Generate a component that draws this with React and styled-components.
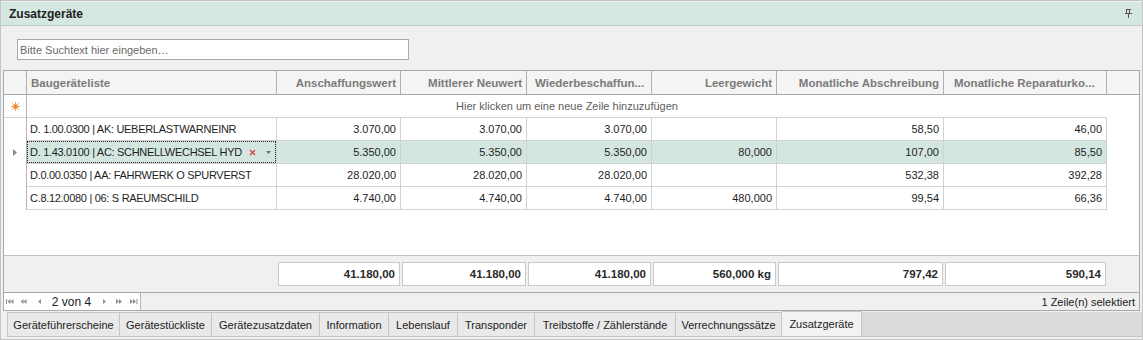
import React from "react";
import styled, { createGlobalStyle } from "styled-components";

const GlobalStyle = createGlobalStyle`
  html, body { margin: 0; padding: 0; background: #ffffff; }
  body { font-family: "Liberation Sans", Arial, sans-serif; font-size: 11px; color: #1e1e1e; }
  * { box-sizing: border-box; }
`;

const COLS = "23px 250px 124px 126px 125px 125px 167px 163px 1fr";

const Panel = styled.div`
  width: 1143px;
  height: 340px;
  border: 1px solid #c4c4c4;
  padding-top: 1px;
  background: #f0f0f0;
  display: flex;
  flex-direction: column;
`;

const TitleBar = styled.div`
  height: 24px;
  flex: none;
  background: #d4e8e1;
  border-bottom: 1px solid #b9cfc8;
  display: flex;
  align-items: center;
  justify-content: space-between;
  padding: 0 8px 0 8px;
`;

const TitleText = styled.span`
  font-weight: bold;
  font-size: 12px;
  color: #222;
`;

const PinIcon = styled.svg`
  width: 7px;
  height: 9px;
  margin-right: 2px;
  margin-top: -1px;
`;

const SearchArea = styled.div`
  flex: none;
  padding: 13px 16px 10px 16px;
`;

const SearchInput = styled.input`
  display: block;
  width: 392px;
  height: 21px;
  border: 1px solid #a9a9a9;
  background: #fff;
  padding: 0 2px;
  font-family: "Liberation Sans", Arial, sans-serif;
  font-size: 11px;
  color: #333;
  outline: none;
  &::placeholder { color: #6a6a6a; }
`;

const GridFrame = styled.div`
  flex: none;
  margin: 0 2px;
  height: 241px;
  border: 1px solid #a8a8a8;
  background: #fff;
  display: flex;
  flex-direction: column;
`;

const HeaderRow = styled.div`
  display: grid;
  grid-template-columns: ${COLS};
  height: 24px;
  flex: none;
  background: #f4f4f4;
  border-bottom: 1px solid #a8a8a8;
`;

const HeaderCell = styled.div`
  display: flex;
  align-items: center;
  justify-content: ${(p) => (p.$align === "right" ? "flex-end" : "flex-start")};
  padding: 0 4px 0 ${(p) => (p.$pl || 4)}px;
  border-right: ${(p) => (p.$last ? "none" : "1px solid #b0b0b0")};
  font-weight: bold;
  font-size: 11.5px;
  color: #7b7b7b;
  white-space: nowrap;
  overflow: hidden;
`;

const NewRow = styled.div`
  display: grid;
  grid-template-columns: ${COLS};
  height: 23px;
  flex: none;
`;

const Indicator = styled.div`
  display: flex;
  align-items: center;
  justify-content: center;
  border-right: 1px solid #b4b4b4;
  border-bottom: ${(p) => (p.$line ? "1px solid #d2d2d2" : "none")};
`;

const NewRowText = styled.div`
  grid-column: 2 / 9;
  display: flex;
  align-items: center;
  justify-content: center;
  border-bottom: 1px solid #d2d2d2;
  color: #5e5e5e;
  font-size: 11px;
`;

const Row = styled.div`
  display: grid;
  grid-template-columns: ${COLS};
  height: 23px;
  flex: none;
`;

const Cell = styled.div`
  position: relative;
  display: flex;
  align-items: center;
  justify-content: ${(p) => (p.$align === "right" ? "flex-end" : "flex-start")};
  padding: 0 4px 0 3px;
  background: ${(p) => (p.$selected ? "#d3e7e0" : "#ffffff")};
  border-right: 1px solid #d2d2d2;
  border-bottom: 1px solid #d2d2d2;
  white-space: nowrap;
  overflow: hidden;
  color: #1e1e1e;
  letter-spacing: ${(p) => (p.$tight ? "-0.3px" : "0")};
`;

const FocusBox = styled.div`
  position: absolute;
  inset: 0;
  border: 1px dotted #222;
  pointer-events: none;
`;

const CellEditor = styled.div`
  position: absolute;
  right: 5px;
  top: 0;
  bottom: 0;
  display: flex;
  align-items: center;
  gap: 10px;
`;

const Blank = styled.div``;

const EmptyArea = styled.div`
  flex: 1;
  background: #fff;
`;

const SummaryRow = styled.div`
  display: grid;
  grid-template-columns: ${COLS};
  height: 38px;
  flex: none;
  background: #f0f0f0;
  border-top: 1px solid #c2c2c2;
  border-bottom: 1px solid #a8a8a8;
`;

const SummaryCell = styled.div`
  padding: 6px 1px 0 1px;
`;

const SummaryBox = styled.div`
  height: 24px;
  background: #fff;
  border: 1px solid #c9c9c9;
  display: flex;
  align-items: center;
  justify-content: flex-end;
  padding-right: 4px;
  font-weight: bold;
  font-size: 11.5px;
  color: #2a2a2a;
`;

const NavBar = styled.div`
  height: 17px;
  flex: none;
  display: flex;
  align-items: stretch;
  justify-content: space-between;
  background: #f0f0f0;
`;

const Navigator = styled.div`
  width: 137px;
  background: #fff;
  border-right: 1px solid #b4b4b4;
  display: flex;
  align-items: center;
`;

const NavButton = styled.div`
  width: ${(p) => p.$w}px;
  height: 100%;
  display: flex;
  align-items: center;
  justify-content: center;
`;

const NavText = styled.span`
  padding: 0 5px;
  font-size: 12px;
  color: #222;
  white-space: nowrap;
`;

const StatusText = styled.span`
  align-self: center;
  padding-right: 4px;
  font-size: 11px;
  color: #222;
`;

const TabStrip = styled.div`
  display: flex;
  height: 26px;
  flex: none;
  padding-left: 6px;
  background: #f0f0f0;
`;

const Tab = styled.div`
  width: ${(p) => p.$w}px;
  height: ${(p) => (p.$active ? "26px" : "25px")};
  margin-top: ${(p) => (p.$active ? "0" : "1px")};
  display: flex;
  align-items: center;
  justify-content: center;
  background: ${(p) => (p.$active ? "#f2f2f2" : "#e9e9e9")};
  border: 1px solid #c6c6c6;
  border-left: ${(p) => (p.$first ? "1px solid #c6c6c6" : "none")};
  font-size: 11px;
  color: #222;
  white-space: nowrap;
`;

const TabFiller = styled.div`
  flex: 1;
  margin-top: 1px;
  background: #dcdcdc;
  border-bottom: 1px solid #c6c6c6;
`;

const BottomEdge = styled.div`
  flex: 1;
  background: #f0f0f0;
`;

const Star = () => (
  <svg width="9" height="9" viewBox="0 0 9 9">
    <g stroke="#f5a05a" strokeWidth="1">
      <line x1="4.5" y1="0" x2="4.5" y2="9" />
      <line x1="0" y1="4.5" x2="9" y2="4.5" />
      <line x1="1.3" y1="1.3" x2="7.7" y2="7.7" />
      <line x1="7.7" y1="1.3" x2="1.3" y2="7.7" />
    </g>
    <circle cx="4.5" cy="4.5" r="2.3" fill="#f08a30" />
  </svg>
);

const RowArrow = () => (
  <svg width="4" height="7" viewBox="0 0 4 7">
    <path d="M0 0 L4 3.5 L0 7 Z" fill="#8a8a8a" />
  </svg>
);

const Tri = ({ dir, x = 0 }) =>
  dir === "l" ? <path d={`M${x + 3} 0 L${x} 2.5 L${x + 3} 5 Z`} /> : <path d={`M${x} 0 L${x + 3} 2.5 L${x} 5 Z`} />;

const NavIcon = ({ kind }) => {
  let content;
  let w = 8;
  if (kind === "first") {
    content = (
      <>
        <rect x="0" y="0" width="1" height="5" />
        <Tri dir="l" x={1.5} />
        <Tri dir="l" x={4.5} />
      </>
    );
  } else if (kind === "prevPage") {
    content = (
      <>
        <Tri dir="l" x={0.5} />
        <Tri dir="l" x={3.5} />
      </>
    );
    w = 7;
  } else if (kind === "prev") {
    content = <Tri dir="l" x={0} />;
    w = 3;
  } else if (kind === "next") {
    content = <Tri dir="r" x={0} />;
    w = 3;
  } else if (kind === "nextPage") {
    content = (
      <>
        <Tri dir="r" x={0} />
        <Tri dir="r" x={3} />
      </>
    );
    w = 7;
  } else {
    content = (
      <>
        <Tri dir="r" x={0} />
        <Tri dir="r" x={3} />
        <rect x="6.5" y="0" width="1" height="5" />
      </>
    );
  }
  return (
    <svg width={w} height="5" viewBox={`0 0 ${w} 5`} fill="#8f8f8f">
      {content}
    </svg>
  );
};

const columns = [
  { key: "name", label: "Baugeräteliste", align: "left", pl: 4 },
  { key: "a", label: "Anschaffungswert", align: "right" },
  { key: "m", label: "Mittlerer Neuwert", align: "right" },
  { key: "w", label: "Wiederbeschaffun...", align: "left", pl: 8 },
  { key: "l", label: "Leergewicht", align: "right" },
  { key: "ab", label: "Monatliche Abschreibung", align: "right" },
  { key: "r", label: "Monatliche Reparaturko...", align: "left", pl: 10 },
];

const rows = [
  { name: "D. 1.00.0300 | AK: UEBERLASTWARNEINR", a: "3.070,00", m: "3.070,00", w: "3.070,00", l: "", ab: "58,50", r: "46,00" },
  { name: "D. 1.43.0100 | AC: SCHNELLWECHSEL HYD", a: "5.350,00", m: "5.350,00", w: "5.350,00", l: "80,000", ab: "107,00", r: "85,50", selected: true },
  { name: "D.0.00.0350 | AA: FAHRWERK O SPURVERST", a: "28.020,00", m: "28.020,00", w: "28.020,00", l: "", ab: "532,38", r: "392,28" },
  { name: "C.8.12.0080 | 06: S RAEUMSCHILD", a: "4.740,00", m: "4.740,00", w: "4.740,00", l: "480,000", ab: "99,54", r: "66,36" },
];

const summary = ["41.180,00", "41.180,00", "41.180,00", "560,000 kg", "797,42", "590,14"];

const tabs = [
  { label: "Geräteführerscheine", w: 113 },
  { label: "Gerätestückliste", w: 92 },
  { label: "Gerätezusatzdaten", w: 108 },
  { label: "Information", w: 69 },
  { label: "Lebenslauf", w: 69 },
  { label: "Transponder", w: 77 },
  { label: "Treibstoffe / Zählerstände", w: 141 },
  { label: "Verrechnungssätze", w: 106 },
  { label: "Zusatzgeräte", w: 80 },
];

export default function App() {
  return (
    <>
      <GlobalStyle />
      <Panel>
        <TitleBar>
          <TitleText>Zusatzgeräte</TitleText>
          <PinIcon viewBox="0 0 7 9">
            <g stroke="#555" strokeWidth="1" fill="none">
              <path d="M1 0.5 H6" />
              <path d="M1.5 0.5 V4.5 M4.5 0.5 V4.5" />
              <path d="M0 4.5 H7" />
              <path d="M3.5 4.5 V9" />
            </g>
          </PinIcon>
        </TitleBar>
        <SearchArea>
          <SearchInput placeholder="Bitte Suchtext hier eingeben…" />
        </SearchArea>
        <GridFrame>
          <HeaderRow>
            <HeaderCell />
            {columns.map((c) => (
              <HeaderCell key={c.key} $align={c.align} $pl={c.pl}>
                {c.label}
              </HeaderCell>
            ))}
            <HeaderCell $last />
          </HeaderRow>
          <NewRow>
            <Indicator $line>
              <Star />
            </Indicator>
            <NewRowText>Hier klicken um eine neue Zeile hinzuzufügen</NewRowText>
          </NewRow>
          {rows.map((r, i) => (
            <Row key={i}>
              <Indicator>{r.selected && <RowArrow />}</Indicator>
              {columns.map((c, ci) => (
                <Cell key={c.key} $align={ci === 0 ? "left" : "right"} $tight={ci === 0} $selected={r.selected}>
                  {r[c.key]}
                  {r.selected && ci === 0 && (
                    <>
                      <FocusBox />
                      <CellEditor>
                        <svg width="7" height="7" viewBox="0 0 7 7">
                          <path d="M1 1 L6 6 M6 1 L1 6" stroke="#d8404a" strokeWidth="1.4" />
                        </svg>
                        <svg width="5" height="3" viewBox="0 0 5 3">
                          <path d="M0 0 H5 L2.5 3 Z" fill="#6f6f6f" />
                        </svg>
                      </CellEditor>
                    </>
                  )}
                </Cell>
              ))}
              <Blank />
            </Row>
          ))}
          <EmptyArea />
          <SummaryRow>
            <Blank />
            <Blank />
            {summary.map((s, i) => (
              <SummaryCell key={i}>
                <SummaryBox>{s}</SummaryBox>
              </SummaryCell>
            ))}
            <Blank />
          </SummaryRow>
          <NavBar>
            <Navigator>
              <NavButton $w={12}><NavIcon kind="first" /></NavButton>
              <NavButton $w={16}><NavIcon kind="prevPage" /></NavButton>
              <NavButton $w={16}><NavIcon kind="prev" /></NavButton>
              <NavText>2 von 4</NavText>
              <NavButton $w={16}><NavIcon kind="next" /></NavButton>
              <NavButton $w={16}><NavIcon kind="nextPage" /></NavButton>
              <NavButton $w={13}><NavIcon kind="last" /></NavButton>
            </Navigator>
            <StatusText>1 Zeile(n) selektiert</StatusText>
          </NavBar>
        </GridFrame>
        <TabStrip>
          {tabs.map((t, i) => (
            <Tab key={t.label} $w={t.w} $first={i === 0} $active={i === tabs.length - 1}>
              {t.label}
            </Tab>
          ))}
          <TabFiller />
        </TabStrip>
        <BottomEdge />
      </Panel>
    </>
  );
}
